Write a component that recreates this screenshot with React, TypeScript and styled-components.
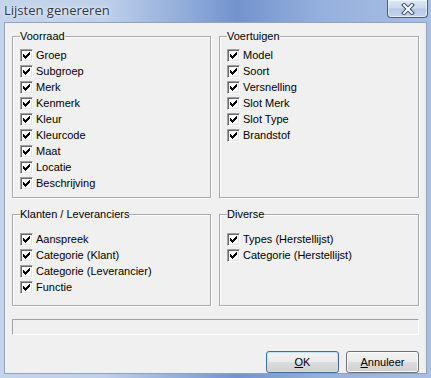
import React from 'react'
import styled, { createGlobalStyle } from 'styled-components'

const GlobalStyle = createGlobalStyle`
  html, body {
    margin: 0;
    padding: 0;
  }
  body {
    width: 431px;
    height: 378px;
    overflow: hidden;
    font-family: 'Liberation Sans', Tahoma, Arial, sans-serif;
  }
`

const Window = styled.div`
  width: 431px;
  height: 378px;
  box-sizing: border-box;
  display: flex;
  flex-direction: column;
  background: linear-gradient(
    to right,
    #c4d4eb 0%,
    #bfd0ea 24%,
    #8eaad8 44%,
    #7393cd 55%,
    #95b0dd 74%,
    #a8bfe3 100%
  );
`

const TitleBar = styled.div`
  height: 22px;
  display: flex;
  justify-content: space-between;
  align-items: flex-start;
  padding-left: 4px;
`

const Title = styled.div`
  font-family: 'Open Sans', 'Noto Sans', sans-serif;
  font-size: 13px;
  line-height: 16px;
  padding-top: 2px;
  color: #2c3646;
  text-shadow: 0 0 6px rgba(255, 255, 255, 0.9), 0 0 2px rgba(255, 255, 255, 0.8);
`

const CloseButton = styled.div`
  width: 41px;
  height: 18px;
  margin-right: 3px;
  box-sizing: border-box;
  display: flex;
  align-items: center;
  justify-content: center;
  border: 1px solid #4a5c7e;
  border-top: none;
  border-radius: 0 0 4px 4px;
  background: linear-gradient(#dfe8f5 0%, #cbd8ec 48%, #b4c7e5 52%, #c6d5ee 100%);
  box-shadow: inset 0 0 0 1px rgba(255, 255, 255, 0.55);
`

const Client = styled.div`
  flex: 1;
  margin: 0 4px 4px 4px;
  border: 1px solid #8fa2bf;
  background: #f0f0f0;
  padding: 7px 7px 0 7px;
  display: flex;
  flex-direction: column;
`

const Groups = styled.div`
  display: grid;
  grid-template-columns: 199px 200px;
  column-gap: 8px;
  row-gap: 10px;
`

const Group = styled.fieldset<{ $top: number; $bottom: number }>`
  margin: 0;
  min-width: 0;
  padding: ${({ $top }) => $top}px 7px ${({ $bottom }) => $bottom}px 7px;
  border: 1px solid #a9a9a9;
  box-shadow: 1px 1px 0 #fff, inset 1px 1px 0 #fff;
`

const Legend = styled.legend`
  padding: 0;
  font-size: 11px;
  line-height: 13px;
  color: #000;
  background: #f0f0f0;
`

const Row = styled.label`
  display: flex;
  align-items: center;
  gap: 3px;
  height: 16px;
  font-size: 11px;
  color: #000;
  white-space: nowrap;
`

const Box = styled.span`
  width: 13px;
  height: 13px;
  box-sizing: border-box;
  display: flex;
  align-items: center;
  justify-content: center;
  background: #fff;
  border-style: solid;
  border-width: 1px;
  border-color: #a0a0a0 #fff #fff #a0a0a0;
  box-shadow: inset 1px 1px 0 #696969, inset -1px -1px 0 #e3e3e3;
`

const StatusPanel = styled.div`
  height: 16px;
  margin-top: 13px;
  box-sizing: border-box;
  border: 1px solid;
  border-color: #a0a0a0 #fff #fff #a0a0a0;
`

const ButtonRow = styled.div`
  margin-top: 16px;
  display: flex;
  justify-content: flex-end;
  gap: 7px;
`

const Button = styled.div<{ $default?: boolean }>`
  width: 73px;
  height: 22px;
  box-sizing: border-box;
  display: flex;
  align-items: center;
  justify-content: center;
  font-size: 11px;
  color: #000;
  border: 1px solid ${({ $default }) => ($default ? '#3c6f9e' : '#707070')};
  border-radius: 3px;
  background: linear-gradient(#f2f2f2 0%, #ebebeb 48%, #dddddd 52%, #cfcfcf 100%);
  box-shadow: inset 0 0 0 1px ${({ $default }) => ($default ? '#bfe3f7' : '#fbfbfb')};
`

const Key = styled.span`
  text-decoration: underline;
`

const CheckMark = () => (
  <svg width="7" height="7" viewBox="0 0 7 7" shapeRendering="crispEdges">
    <path
      d="M6 0h1v1h-1zM5 1h2v1h-2zM0 2h1v1h-1zM4 2h3v1h-3zM0 3h2v1h-2zM3 3h3v1h-3zM0 4h5v1h-5zM1 5h3v1h-3zM2 6h1v1h-1z"
      fill="#000"
    />
  </svg>
)

const CloseGlyph = () => (
  <svg width="14" height="12" viewBox="0 0 14 12">
    <path d="M3 2L11 10M11 2L3 10" stroke="#3a4a66" strokeWidth="4" strokeLinecap="square" />
    <path d="M3 2L11 10M11 2L3 10" stroke="#fff" strokeWidth="2" strokeLinecap="square" />
  </svg>
)

const Check = ({ label }: { label: string }) => (
  <Row>
    <Box>
      <CheckMark />
    </Box>
    {label}
  </Row>
)

const groups = [
  {
    title: 'Voorraad',
    top: 4,
    bottom: 6,
    items: ['Groep', 'Subgroep', 'Merk', 'Kenmerk', 'Kleur', 'Kleurcode', 'Maat', 'Locatie', 'Beschrijving'],
  },
  {
    title: 'Voertuigen',
    top: 4,
    bottom: 6,
    items: ['Model', 'Soort', 'Versnelling', 'Slot Merk', 'Slot Type', 'Brandstof'],
  },
  {
    title: 'Klanten / Leveranciers',
    top: 10,
    bottom: 10,
    items: ['Aanspreek', 'Categorie (Klant)', 'Categorie (Leverancier)', 'Functie'],
  },
  {
    title: 'Diverse',
    top: 10,
    bottom: 10,
    items: ['Types (Herstellijst)', 'Categorie (Herstellijst)'],
  },
]

const App = () => (
  <>
    <GlobalStyle />
    <Window>
      <TitleBar>
        <Title>Lijsten genereren</Title>
        <CloseButton>
          <CloseGlyph />
        </CloseButton>
      </TitleBar>
      <Client>
        <Groups>
          {groups.map((g) => (
            <Group key={g.title} $top={g.top} $bottom={g.bottom}>
              <Legend>{g.title}</Legend>
              {g.items.map((item) => (
                <Check key={item} label={item} />
              ))}
            </Group>
          ))}
        </Groups>
        <StatusPanel />
        <ButtonRow>
          <Button $default>
            <Key>O</Key>K
          </Button>
          <Button>
            <Key>A</Key>nnuleer
          </Button>
        </ButtonRow>
      </Client>
    </Window>
  </>
)

export default App
